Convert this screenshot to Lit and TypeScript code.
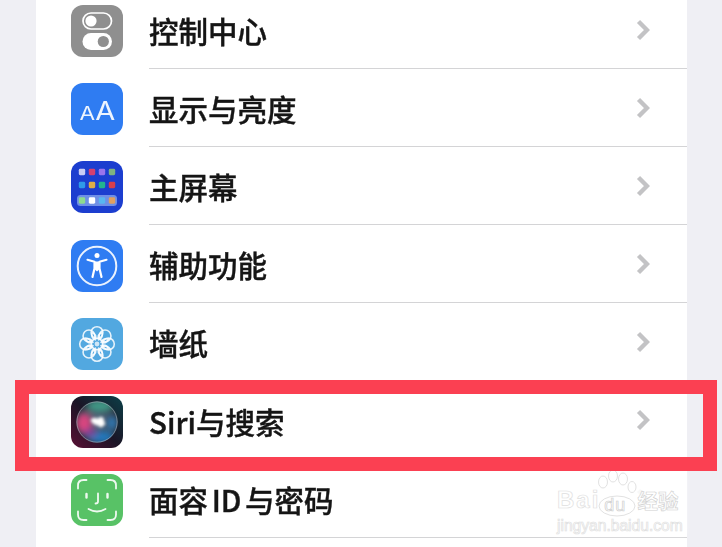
import { LitElement, html, css, svg } from "lit";
import { customElement } from "lit/decorators.js";

const ICON_BLUE = "#2f7cf2";

const controlIcon = svg`
  <rect width="52" height="52" rx="12" fill="#8f8f8f"/>
  <rect x="12" y="8" width="28.5" height="16" rx="8" fill="none" stroke="#fff" stroke-width="1.7"/>
  <circle cx="20" cy="16" r="5.6" fill="#fff"/>
  <rect x="11.5" y="28" width="29.5" height="17" rx="8.5" fill="#fff"/>
  <circle cx="32.3" cy="36.5" r="5.6" fill="#8f8f8f"/>`;

const displayIcon = svg`
  <rect width="52" height="52" rx="12" fill="${ICON_BLUE}"/>
  <g fill="#fff" fill-opacity=".92" font-family="Inter, 'Liberation Sans', sans-serif" font-weight="400">
    <text x="8.5" y="36.7" font-size="18.3" textLength="15.6" lengthAdjust="spacingAndGlyphs">A</text>
    <text x="24.3" y="36.7" font-size="25.3" textLength="20" lengthAdjust="spacingAndGlyphs">A</text>
  </g>`;

const dot = (x: number, y: number, c: string) =>
  svg`<rect x=${x - 3.2} y=${y - 3.2} width="6.4" height="6.4" rx="1.4" fill=${c}/>`;

const homeIcon = svg`
  <rect width="52" height="52" rx="12" fill="#1c3ecf"/>
  ${dot(11, 11, "#c9cdf4")}${dot(21, 11, "#d5406f")}${dot(31, 11, "#9a74ec")}${dot(41, 11, "#7fb27f")}
  ${dot(11, 24, "#2f9ae8")}${dot(21, 24, "#e0ad48")}${dot(31, 24, "#22b48f")}${dot(41, 24, "#d83f4c")}
  <rect x="6" y="34" width="40" height="11" rx="3.5" fill="#6f8fe6"/>
  ${dot(11, 39.5, "#8edb8e")}${dot(21, 39.5, "#ffffff")}${dot(31, 39.5, "#58b6f0")}${dot(41, 39.5, "#e0a060")}`;

const accessIcon = svg`
  <rect width="52" height="52" rx="12" fill="${ICON_BLUE}"/>
  <circle cx="26" cy="26" r="19.3" fill="none" stroke="#fff" stroke-opacity=".9" stroke-width="2"/>
  <circle cx="26" cy="15.6" r="2.5" fill="#fff"/>
  <path d="M23.3 21.5 H28.7 V29 L26 31.5 L23.3 29 Z" fill="#fff"/>
  <path d="M16.5 19.8 L23.5 21.8 V28.5 L21.5 37 M35.5 19.8 L28.5 21.8 V28.5 L30.5 37"
    fill="none" stroke="#fff" stroke-width="2.2" stroke-linecap="round" stroke-linejoin="round"/>`;

const petals = [0, 45, 90, 135, 180, 225, 270, 315];
const wallpaperIcon = svg`
  <rect width="52" height="52" rx="12" fill="#52a8e0"/>
  <g fill="none" stroke="#fff" stroke-opacity=".85" stroke-width="1.6">
    ${petals.map(
      (a) => svg`<circle cx="26" cy="14.6" r="5.9" transform="rotate(${a} 26 26)"/>`
    )}
    ${petals.map(
      (a) => svg`<path d="M26 21.5 C23.4 19 23.4 16.5 26 13.5 C28.6 16.5 28.6 19 26 21.5Z" transform="rotate(${a + 22.5} 26 26)"/>`
    )}
  </g>
  <circle cx="26" cy="26" r="2.4" fill="#cfe6f6"/>`;

const siriIcon = svg`
  <defs>
    <linearGradient id="sbg" x1="0" y1="1" x2="1" y2="0">
      <stop offset="0" stop-color="#5a1034"/>
      <stop offset=".5" stop-color="#1a1526"/>
      <stop offset="1" stop-color="#0c3f48"/>
    </linearGradient>
    <radialGradient id="sorb" cx=".5" cy=".5" r=".5">
      <stop offset="0" stop-color="#60748c"/>
      <stop offset="1" stop-color="#2b3644"/>
    </radialGradient>
    <filter id="sb1" x="-50%" y="-50%" width="200%" height="200%"><feGaussianBlur stdDeviation="3"/></filter>
    <filter id="sb2" x="-50%" y="-50%" width="200%" height="200%"><feGaussianBlur stdDeviation="1.4"/></filter>
    <clipPath id="sclip"><circle cx="26" cy="26" r="20.5"/></clipPath>
  </defs>
  <rect width="52" height="52" rx="12" fill="url(#sbg)"/>
  <circle cx="26" cy="26" r="20.5" fill="url(#sorb)"/>
  <g clip-path="url(#sclip)">
    <g filter="url(#sb1)">
      <ellipse cx="13" cy="27" rx="8" ry="10" fill="#d8447f"/>
      <ellipse cx="30" cy="41" rx="13" ry="6" fill="#2478bd"/>
      <ellipse cx="29" cy="10" rx="13" ry="6" fill="#3f9a86"/>
      <ellipse cx="41" cy="27" rx="5" ry="7" fill="#2e78b4"/>
      <ellipse cx="19" cy="37" rx="7" ry="4" fill="#7a3f9a"/>
    </g>
  </g>
  <g filter="url(#sb2)">
    <ellipse cx="27" cy="26" rx="7.5" ry="3.4" fill="#fff" transform="rotate(18 27 26)"/>
    <ellipse cx="30" cy="26" rx="3.2" ry="5.2" fill="#fff"/>
  </g>
  <circle cx="26" cy="26" r="20.2" fill="none" stroke="#c4ccd4" stroke-opacity=".5" stroke-width="1"/>`;

const faceIcon = svg`
  <rect width="52" height="52" rx="12" fill="#58c266"/>
  <g fill="none" stroke="#fff" stroke-opacity=".9" stroke-width="1.8" stroke-linecap="round" stroke-linejoin="round">
    <path d="M7 14.5 V11.5 Q7 6 12.5 6 H15.5"/>
    <path d="M36.5 6 H39.5 Q45 6 45 11.5 V14.5"/>
    <path d="M7 37.5 V40.5 Q7 46 12.5 46 H15.5"/>
    <path d="M36.5 46 H39.5 Q45 46 45 40.5 V37.5"/>
    <path d="M15.5 20 V23.5 M36.5 20 V23.5" stroke-width="2.4"/>
    <path d="M27 19.5 V27.5 Q27 29.5 24.5 29.5"/>
    <path d="M17.5 35 Q26 40 34.5 35"/>
  </g>`;

const ROWS = [
  { label: "控制中心", icon: controlIcon },
  { label: "显示与亮度", icon: displayIcon },
  { label: "主屏幕", icon: homeIcon },
  { label: "辅助功能", icon: accessIcon },
  { label: "墙纸", icon: wallpaperIcon },
  { label: "Siri与搜索", icon: siriIcon },
  { label: "面容 ID 与密码", icon: faceIcon },
];

@customElement("app-root")
export class AppRoot extends LitElement {
  static styles = css`
    :host {
      display: flex;
      flex-direction: column;
      width: 722px;
      height: 547px;
      overflow: hidden;
      position: relative;
      background: #efeff4;
      font-family: "Noto Sans CJK SC", "Noto Sans", sans-serif;
    }
    .card {
      flex: 1;
      margin: -9.3px 35px 0 36px;
      background: #fff;
      filter: blur(0.45px);
    }
    .row {
      display: flex;
      height: 78.17px;
      padding-left: 35px;
      box-sizing: border-box;
      gap: 26px;
    }
    .icon {
      width: 52px;
      height: 52px;
      flex: none;
      align-self: center;
      margin-top: 2.6px;
    }
    .body {
      flex: 1;
      display: flex;
      align-items: center;
      justify-content: space-between;
      padding: 2.6px 37px 0 0;
      border-bottom: 1px solid #d4d4d6;
    }
    .label {
      font-size: 29.5px;
      font-weight: 500;
      -webkit-text-stroke: 0.4px #151515;
      color: #151515;
      line-height: 1;
      white-space: pre;
      word-spacing: -3px;
    }
    .chev {
      width: 14px;
      height: 22px;
      flex: none;
      margin-top: -2px;
    }
    .highlight {
      position: absolute;
      left: 15px;
      top: 380px;
      width: 702px;
      height: 91px;
      box-sizing: border-box;
      border: 14px solid #fb4052;
    }
    .mark {
      position: absolute;
      left: 557px;
      top: 470px;
      width: 128px;
      height: 64px;
      background: rgba(255, 255, 255, 0.88);
      box-shadow: 0 0 6px rgba(255, 255, 255, 0.88);
      color: transparent;
      -webkit-text-stroke: 0.7px #e0e0e0;
      font-family: "Liberation Sans", sans-serif;
    }
    .paw {
      position: absolute;
      left: 40px;
      top: 0;
      width: 40px;
      height: 50px;
    }
    .mark-line {
      position: relative;
      display: flex;
      align-items: flex-end;
      height: 20px;
      margin-top: 20px;
      font-size: 24px;
      font-weight: 700;
      line-height: 20px;
      letter-spacing: 2px;
    }
    .du {
      margin: 0 0 -5px 4px;
      font-size: 18px;
      font-weight: 400;
      letter-spacing: 1px;
      -webkit-text-stroke: 0.7px #cfcfcf;
    }
    .cn {
      margin-left: 11px;
      font-family: "Noto Sans CJK SC", sans-serif;
      font-size: 20.5px;
      letter-spacing: 0;
      -webkit-text-stroke: 0.6px #d0d0d0;
    }
    .url {
      font-size: 15.6px;
      line-height: 1;
      margin-top: 8px;
      white-space: nowrap;
    }
  `;

  render() {
    return html`
      <div class="card">
        ${ROWS.map(
          (r) => html`
            <div class="row">
              <svg class="icon" viewBox="0 0 52 52">${r.icon}</svg>
              <div class="body">
                <span class="label">${r.label}</span>
                <svg class="chev" viewBox="0 0 14 22">
                  <path d="M2.5 2.5 L11 11 L2.5 19.5" fill="none" stroke="#c3c3c5" stroke-width="4.4"/>
                </svg>
              </div>
            </div>
          `
        )}
      </div>
      <div class="mark">
        <svg class="paw" viewBox="0 0 40 50">
          <g fill="#fff" fill-opacity=".55" stroke="#e2e2e2" stroke-width="1">
            <ellipse cx="6" cy="12" rx="4.5" ry="6"/>
            <ellipse cx="16" cy="6" rx="4.5" ry="6"/>
            <ellipse cx="26" cy="9" rx="4.5" ry="6"/>
            <ellipse cx="35" cy="17" rx="4" ry="5.5"/>
            <ellipse cx="20" cy="36" rx="18" ry="10"/>
          </g>
        </svg>
        <div class="mark-line">
          <span>Bai</span><span class="du">du</span><span class="cn">经验</span>
        </div>
        <div class="url">jingyan.baidu.com</div>
      </div>
      <div class="highlight"></div>
    `;
  }
}
